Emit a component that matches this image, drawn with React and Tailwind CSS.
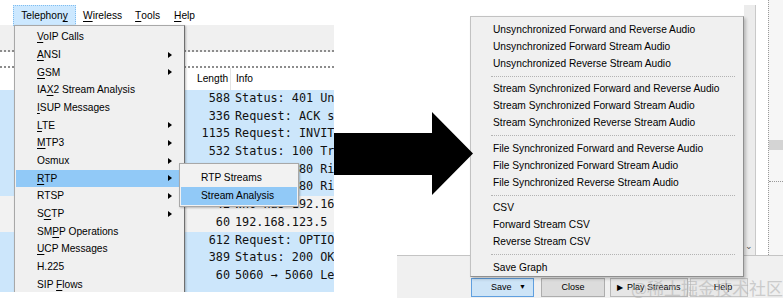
import React from 'react';

// Wireshark "Telephony > RTP > Stream Analysis" menu, arrow, and the Save menu of the analysis dialog

const LEFT_MENU = [
  { label: '&VoIP Calls' },
  { label: '&ANSI', sub: true },
  { label: '&GSM', sub: true },
  { label: 'IA&X2 Stream Analysis' },
  { label: '&ISUP Messages' },
  { label: '&LTE', sub: true },
  { label: '&MTP3', sub: true },
  { label: 'Osmux', sub: true },
  { label: '&RTP', sub: true, active: true },
  { label: 'RTSP', sub: true },
  { label: 'S&CTP', sub: true },
  { label: 'SM&PP Operations' },
  { label: '&UCP Messages' },
  { label: 'H.225' },
  { label: 'SIP &Flows' },
];

const PACKETS = [
  { len: '588', info: 'Status: 401 Unauthorized' },
  { len: '336', info: 'Request: ACK sip:1001@192.168.123.5' },
  { len: '1135', info: 'Request: INVITE sip:1001@192.168.123.5', more: true },
  { len: '532', info: 'Status: 100 Trying' },
  { len: '780', info: 'Status: 180 Ringing' },
  { len: '780', info: 'Status: 180 Ringing' },
  { len: '42', info: 'Who has 192.168.123.1? Tell', plain: true },
  { len: '60', info: '192.168.123.5 is at 00:0c', plain: true },
  { len: '612', info: 'Request: OPTIONS sip:' },
  { len: '389', info: 'Status: 200 OK' },
  { len: '60', info: '5060 → 5060 Len=0' },
];

const SAVE_MENU = [
  'Unsynchronized Forward and Reverse Audio',
  'Unsynchronized Forward Stream Audio',
  'Unsynchronized Reverse Stream Audio',
  '-',
  'Stream Synchronized Forward and Reverse Audio',
  'Stream Synchronized Forward Stream Audio',
  'Stream Synchronized Reverse Stream Audio',
  '-',
  'File Synchronized Forward and Reverse Audio',
  'File Synchronized Forward Stream Audio',
  'File Synchronized Reverse Stream Audio',
  '-',
  'CSV',
  'Forward Stream CSV',
  'Reverse Stream CSV',
  '-',
  'Save Graph',
];

// "&X" marks the access key letter
function Mnemonic({ text }) {
  const i = text.indexOf('&');
  if (i < 0) return text;
  return (
    <>
      {text.slice(0, i)}
      <span className="underline underline-offset-2">{text[i + 1]}</span>
      {text.slice(i + 2)}
    </>
  );
}

function SubArrow() {
  return <span className="mr-[11px] h-0 w-0 border-y-[3px] border-l-[4px] border-y-transparent border-l-black" />;
}

function PacketPane() {
  return (
    <div className="relative h-[292px] w-[334px] shrink-0 overflow-hidden">
      {/* menu bar */}
      <div className="flex h-[25px] items-start bg-white pl-[13px] pt-[5px] text-[10.2px] text-black">
        <div className="flex h-[21px] w-[63px] items-center justify-center border border-dotted border-[#7fbdf0] bg-[#cce8ff]">
          <Mnemonic text="Telephon&y" />
        </div>
        <div className="ml-[7px] flex h-[21px] items-center"><Mnemonic text="&Wireless" /></div>
        <div className="ml-[13px] flex h-[21px] items-center"><Mnemonic text="&Tools" /></div>
        <div className="ml-[14px] flex h-[21px] items-center"><Mnemonic text="&Help" /></div>
      </div>

      {/* toolbar + filter bar */}
      <div className="h-[22px] bg-[#f0f0f0]" />
      <div className="h-[5px] border-b-2 border-dotted border-[#8c8c8c] bg-[#f0f0f0]" />
      <div className="h-[16px] border-b-2 border-dotted border-[#8c8c8c] bg-white" />

      {/* column header */}
      <div className="flex h-[22px] items-center bg-white text-[10.2px] text-black">
        <div className="w-[197px]" />
        <div className="flex h-full w-[34px] items-center border-r border-[#e3e3e3]">Length</div>
        <div className="pl-[5px]">Info</div>
      </div>

      {/* packet rows */}
      <div className="flex h-[202px] flex-col bg-[#cce6fb] font-['DejaVu_Sans_Mono',monospace] text-[11.8px] text-[#111]">
        {PACKETS.map((p, i) => (
          <div
            key={i}
            className={`flex h-[17.7px] shrink-0 items-center whitespace-nowrap ${p.plain ? 'bg-[#f2f2f2]' : ''}`}
          >
            <div className="w-[185px] shrink-0 pr-[1px] text-right">{p.more ? '…' : ''}</div>
            <div className="w-[45px] shrink-0 text-right">{p.len}</div>
            <div className="pl-[5px]">{p.info}</div>
          </div>
        ))}
      </div>

      {/* Telephony dropdown */}
      <div className="absolute left-[14px] top-[25px] h-[268px] w-[171px] border border-[#a8a8a8] border-r-[#6f6f6f] bg-[#f0f0f0] pt-[2px] text-[10.2px] text-black shadow-[1px_1px_2px_rgba(0,0,0,0.25)]">
        {LEFT_MENU.map((m) => (
          <div
            key={m.label}
            className={`mx-[1px] flex h-[17.7px] items-center pl-[21px] ${m.active ? 'bg-[#91c9f7]' : ''}`}
          >
            <span className="flex-1"><Mnemonic text={m.label} /></span>
            {m.sub && <SubArrow />}
          </div>
        ))}
      </div>

      {/* RTP submenu */}
      <div className="absolute left-[179px] top-[163px] h-[44px] w-[120px] border border-[#a8a8a8] bg-[#f2f2f2] pt-[5px] text-[10.2px] text-black shadow-[1px_1px_2px_rgba(0,0,0,0.25)]">
        <div className="flex h-[18px] items-center pl-[21px]">RTP Streams</div>
        <div className="mx-[1px] flex h-[18px] items-center bg-[#91c9f7] pl-[20px]">Stream Analysis</div>
      </div>
    </div>
  );
}

function Btn({ className = '', children }) {
  return (
    <div className={`flex h-[19px] items-center border text-[9px] text-black ${className}`}>{children}</div>
  );
}

function AnalysisDialog() {
  return (
    <div className="relative ml-[63px] flex h-[302px] flex-1 flex-col">
      <div className="flex h-[256px] border-b border-[#c4c4c4]">
        <div className="flex-1 bg-white" />
        <div className="relative mt-[5px] w-[12px] border-r border-[#c9c9c9] bg-[#ececec]">
          <span className="absolute bottom-[4px] left-[1px] text-[9px] leading-none text-[#555]">⌄</span>
        </div>
        <div className="w-[12px] bg-white" />
        <div className="relative w-[15px] border-l border-dotted border-[#9a9a9a] bg-[#f6f6f6]">
          <div className="absolute left-0 right-0 top-[140px] h-[10px] bg-[#d4d4d4]" />
          <div className="absolute left-0 right-0 top-[181px] border-t border-dotted border-[#999]" />
        </div>
      </div>

      {/* dialog button box */}
      <div className="flex h-[42px] items-start bg-[#f0f0f0] pl-[74px] pt-[22px]">
        <Btn className="w-[63px] border-[#5f9fdf] bg-[#cde4f7]">
          <span className="ml-[19px] flex-1">Save</span>
          <span className="mr-[7px] text-[7px]">▼</span>
        </Btn>
        <Btn className="ml-[7px] w-[64px] justify-center border-[#adadad] bg-[#dcdcdc]">Close</Btn>
        <Btn className="ml-[5px] w-[78px] border-[#b8b8b8] bg-[#e6e6e6]">
          <span className="ml-[6px] mr-[4px] text-[8px]">▶</span>
          Play Streams
        </Btn>
        <Btn className="ml-[2px] w-[58px] justify-center border-[#c8c8c8] bg-[#e9e9e9]">
          <span className="ml-[8px]">Help</span>
        </Btn>
      </div>
      <div className="flex-1 bg-white" />

      {/* Save dropdown */}
      <div className="absolute left-[73px] top-[16px] h-[261px] w-[274px] border border-[#c2c2c2] border-b-[#8f8f8f] border-r-[#8f8f8f] bg-[#f0f0f0] pt-[4px] text-[10.2px] text-black shadow-[2px_2px_3px_rgba(0,0,0,0.22)]">
        {SAVE_MENU.map((label, i) =>
          label === '-' ? (
            <div key={i} className="flex h-[8.5px] items-center pl-[20px] pr-[8px]">
              <div className="flex-1 border-t border-dotted border-[#b3b3b3]" />
            </div>
          ) : (
            <div key={i} className="flex h-[17px] items-center pl-[22px] whitespace-nowrap">{label}</div>
          )
        )}
      </div>

      {/* site watermark */}
      <div className="pointer-events-none absolute right-0 top-[279px] font-['Noto_Sans_CJK_SC',sans-serif] text-[17px] leading-none text-[#b4b4b4] opacity-60">
        @稀土掘金技术社区
      </div>
    </div>
  );
}

export default function App() {
  return (
    <div className="relative flex h-[302px] w-[783px] overflow-hidden bg-white font-['Liberation_Sans',Arial,sans-serif]">
      <PacketPane />
      <AnalysisDialog />
      <svg className="absolute left-[330px] top-[108px]" width="146" height="92" viewBox="0 0 146 92">
        <polygon points="4,25 102,25 102,4 143,45.5 102,87 102,67 4,67" fill="#000" />
      </svg>
    </div>
  );
}
